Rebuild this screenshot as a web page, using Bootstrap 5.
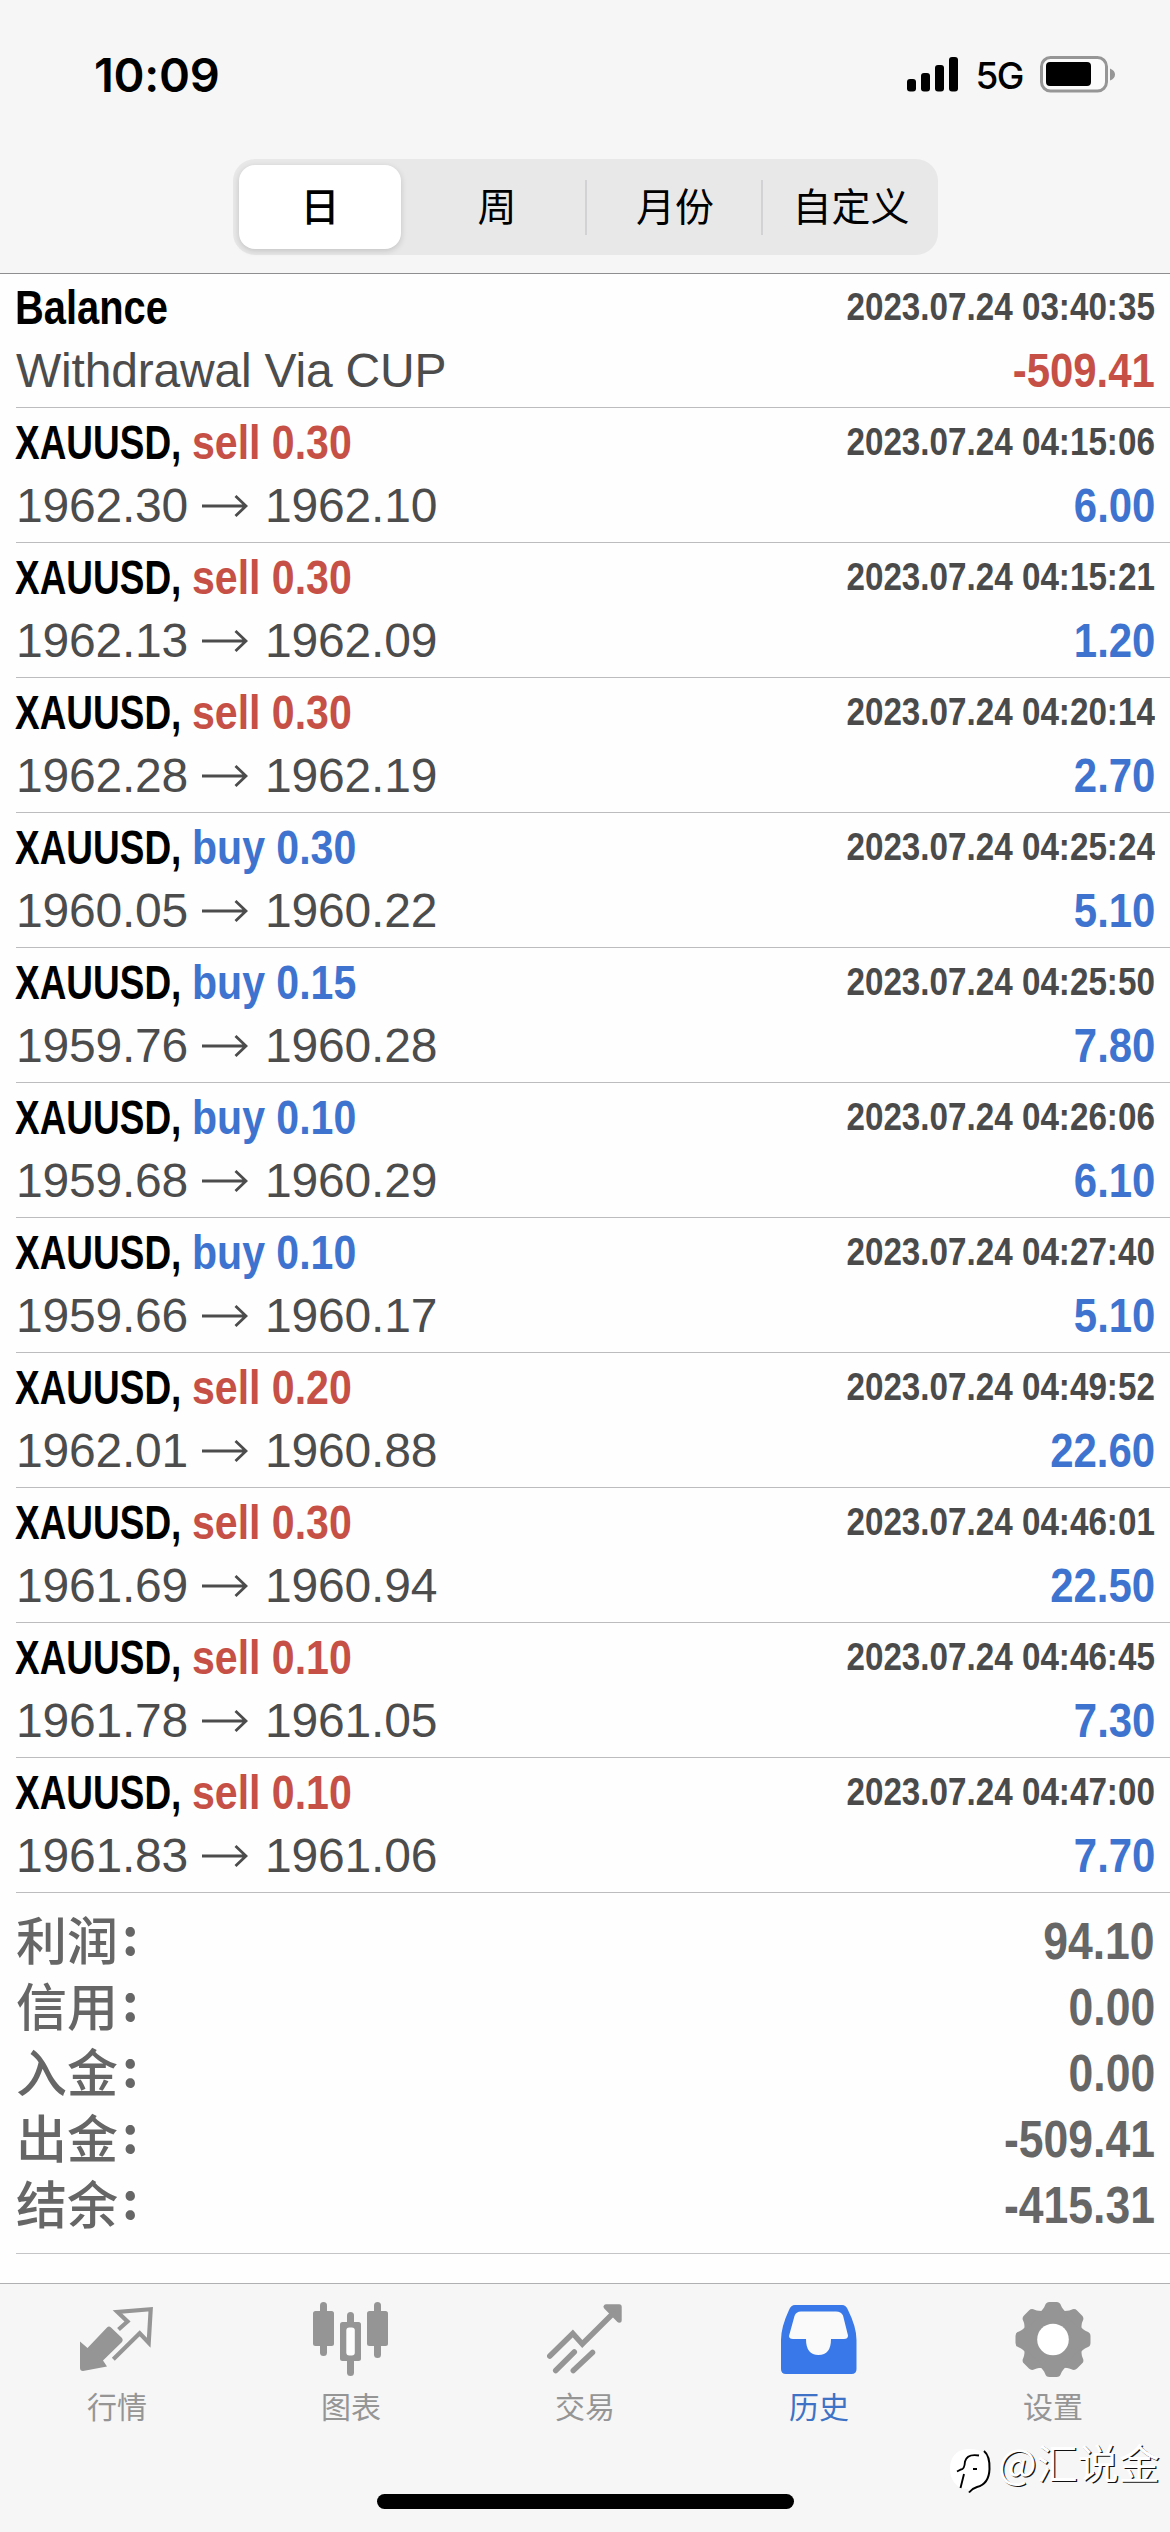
<!DOCTYPE html>
<html lang="zh-CN">
<head>
<meta charset="utf-8">
<meta name="viewport" content="width=device-width, initial-scale=1">
<title>历史</title>
<link href="https://cdn.jsdelivr.net/npm/bootstrap@5.3.0/dist/css/bootstrap.min.css" rel="stylesheet">
<style>
body{width:1170px;height:2532px;background:#fefefe;overflow:hidden;font-family:"Liberation Sans","Noto Sans CJK SC",sans-serif;color:#000}
.topbar{height:274px;background:#f6f6f6;border-bottom:1px solid #8e8e90}
.status{height:159px;padding:0 53px 10px 94px}
.clock{font:600 47px/1 Inter,sans-serif;letter-spacing:-.3px}
.net{font:500 37px/1 Inter,sans-serif;margin:2px 17px 0 16px;letter-spacing:-1.5px}
.seg{width:705px;height:96px;margin-left:233px;padding:6px;background:#e8e8e9;border-radius:22px}
.seg-item{font:400 39px/78px "Noto Sans CJK SC",sans-serif;color:#000;padding:0 0 6px;border:0;width:176px;flex:none}
.seg-item.active{font-weight:500;background:#fff;border-radius:16px;width:162px;box-shadow:0 2px 6px rgba(0,0,0,.16)}
.seg-item.ruled{border-left:2px solid #d2d2d4;line-height:49px;height:55px;padding-left:2px}
.deal{height:135px;margin-left:16px;padding:3px 15px 0 0;border-bottom:1px solid #bcbcbe}
.deal.first{height:134px;padding-top:2px}
.ln{height:63px;line-height:63px;font-size:48px;white-space:nowrap}
.sym{width:176px;font-weight:700;margin-left:-1px;transform:scaleX(.77);transform-origin:0 50%}
.sym.wide{transform:scaleX(.83)}
.act{font-weight:700;margin-left:1px;transform:scaleX(.855);transform-origin:0 50%}
.when{font-size:38px;font-weight:700;color:#4a4a4a;transform:scaleX(.874);transform-origin:100% 50%}
.amt{font-weight:700;transform:scaleX(.873);transform-origin:100% 50%}
.px{color:#4c4c4c;letter-spacing:-.2px}
.px .amt{letter-spacing:0}
.arrow{margin:0 17px 0 14px}
.red{color:#c65046}.blue{color:#3e74cf}
.sums{height:361px;margin-left:16px;padding:16px 15px 0 0;border-bottom:1px solid #c4c4c6;color:#666}
.sum{height:66px;line-height:66px;font-size:51px;font-weight:700}
.sum-name{font-family:"Noto Sans CJK SC",sans-serif;font-weight:500;line-height:59px}
.colon{margin-left:4px;font-family:"Noto Sans CJK SC",sans-serif;line-height:49px}
.tabs{height:250px;margin-top:29px;background:#f6f6f6;border-top:1px solid #b0b0b2;position:relative}
.tab{width:234px;padding-top:18px;color:#959595;font:400 30px/42px "Noto Sans CJK SC",sans-serif}
.tab svg{width:76px;height:76px;margin-bottom:6px}
.tab.on{color:#3d72c6}
.homebar{left:377px;top:210px;width:417px;height:15px;border-radius:8px;background:#000}
.wm{left:949px;top:158px;font:400 41px/52px "Noto Sans CJK SC",sans-serif;color:#fff;text-shadow:1.3px 1px 0 #111;white-space:nowrap}
.wm svg{margin-right:6px;margin-top:5px}
.wm span{margin-top:-7px}
</style>
</head>
<body>
<header class="topbar">
  <div class="status d-flex align-items-center">
    <span class="clock me-auto">10:09</span>
    <svg width="52" height="35" viewBox="0 0 52 35"><rect y="22" width="9" height="12.500" rx="3"/><rect x="14" y="16" width="9" height="18.500" rx="3"/><rect x="28" y="8" width="9" height="26.500" rx="3"/><rect x="42" width="9" height="34.500" rx="3"/></svg>
    <span class="net">5G</span>
    <svg width="77" height="37" viewBox="0 0 77 37"><rect x="1.500" y="1.500" width="65" height="33.500" rx="9" fill="#fbfbfb" stroke="#969696" stroke-width="3"/><rect x="6" y="6" width="45" height="24" rx="4"/><path d="M70 12.500q5 2 5 6t-5 6z" fill="#969696"/></svg>
  </div>
  <div class="seg d-flex align-items-center">
    <button class="btn seg-item active">日</button>
    <button class="btn seg-item ms-2">周</button>
    <button class="btn seg-item ruled rounded-0">月份</button>
    <button class="btn seg-item ruled rounded-0">自定义</button>
  </div>
</header>
<main>
  <section id="deals">
    <div class="deal first">
      <div class="ln d-flex justify-content-between"><span class="sym wide">Balance</span><span class="when">2023.07.24 03:40:35</span></div>
      <div class="ln d-flex justify-content-between"><span class="px">Withdrawal Via CUP</span><span class="amt red">-509.41</span></div>
    </div>
  </section>
  <section class="sums" id="sums"></section>
</main>
<nav class="tabs">
  <div class="d-flex text-center">
    <div class="tab d-flex flex-column align-items-center">
      <svg viewBox="0 0 76 76"><path fill="#959595" d="M1 39.500l7.500 6.500L28 25.500q2-2 4 0l11 10.500q1.500 2 0 4L24 58.500l4 6L4 69q-3 0-3-3z"/><path d="M39.500 27.500l9-8-10-9.500 33.200-2.800-2 33.500-9-9.400-26.400 26" fill="none" stroke="#959595" stroke-width="4.200"/></svg>行情</div>
    <div class="tab d-flex flex-column align-items-center">
      <svg viewBox="0 0 76 76" fill="#959595"><rect x="7" width="7" height="54" rx="3.500"/><rect y="9" width="21" height="35" rx="2.500"/><rect x="61" width="7" height="56" rx="3.500"/><rect x="54" y="9" width="21" height="35" rx="2.500"/><rect x="34" y="10" width="7" height="64" rx="3.500"/><rect x="27" y="20" width="21" height="39" rx="2.500"/><rect x="33.300" y="25.500" width="8.500" height="28" rx="3" fill="#fdfdfd"/></svg>图表</div>
    <div class="tab d-flex flex-column align-items-center">
      <svg viewBox="0 0 76 76" fill="none" stroke="#959595" stroke-width="5.500" stroke-linecap="round"><path d="M2.800 54l23-22.500 9.500 10.500L70 7.500M8.700 68.500l18.600-18.500M26.300 68.500L45.500 50.500"/><path d="M59 4.800h13.200v13.500z" fill="#959595" stroke-linejoin="round" stroke-width="5"/></svg>交易</div>
    <div class="tab on d-flex flex-column align-items-center">
      <svg viewBox="0 0 76 76"><path fill="#3878e8" d="M14 3h47q4 0 6 5 8.500 17 8.500 30v29q0 5-5 5H5q-5 0-5-5V38Q0 25 8 8q2-5 6-5z"/><path fill="#fafafa" d="M20 9.500h35q5 0 7 4l5 20q0 3.500-4 3.500H50q0 16-12.500 16T25 37H12q-4 0-4-3l5.500-20q1.500-4.500 6.500-4.500z"/></svg>历史</div>
    <div class="tab d-flex flex-column align-items-center">
      <svg viewBox="-38 -37.500 76 76" fill="#959595"><defs><path id="tooth" d="M-14-26C-11-29.500-9-31-8-34Q-7-37.500-3.500-37.500h7Q7-37.500 8-34C9-31 11-29.500 14-26z"/></defs><circle r="30"/><use href="#tooth"/><use href="#tooth" transform="rotate(45)"/><use href="#tooth" transform="rotate(90)"/><use href="#tooth" transform="rotate(135)"/><use href="#tooth" transform="rotate(180)"/><use href="#tooth" transform="rotate(225)"/><use href="#tooth" transform="rotate(270)"/><use href="#tooth" transform="rotate(315)"/><circle r="15.800" fill="#fff"/></svg>设置</div>
  </div>
  <div class="homebar position-absolute"></div>
  <div class="wm position-absolute d-flex align-items-start"><svg width="43" height="48" viewBox="0 0 43 48"><path d="M20 2C6 2 1 12 1 22s6 20 18 20l2 4q20-7 20-26C41 8 34 2 20 2z" fill="#fff"/><path d="M35 4q6 5 5.500 18-.5 15-12.500 18-5 1.500-8 5.500" fill="none" stroke="#000" stroke-width="2"/><path d="M30 8.500q-12-2-14 6-.5 8-4 8L8 24.500M15 27l-3.500 14M24 22h4" fill="none" stroke="#000" stroke-width="1.900"/></svg><span>@汇说金</span></div>
</nav>
<script>
const deals=[
["sell","0.30","1962.30","1962.10","04:15:06","6.00"],
["sell","0.30","1962.13","1962.09","04:15:21","1.20"],
["sell","0.30","1962.28","1962.19","04:20:14","2.70"],
["buy","0.30","1960.05","1960.22","04:25:24","5.10"],
["buy","0.15","1959.76","1960.28","04:25:50","7.80"],
["buy","0.10","1959.68","1960.29","04:26:06","6.10"],
["buy","0.10","1959.66","1960.17","04:27:40","5.10"],
["sell","0.20","1962.01","1960.88","04:49:52","22.60"],
["sell","0.30","1961.69","1960.94","04:46:01","22.50"],
["sell","0.10","1961.78","1961.05","04:46:45","7.30"],
["sell","0.10","1961.83","1961.06","04:47:00","7.70"]];
document.getElementById("deals").insertAdjacentHTML("beforeend",deals.map(([side,vol,open,close,time,profit])=>`
<div class="deal">
  <div class="ln d-flex"><span class="sym">XAUUSD,</span><span class="act ${side==="sell"?"red":"blue"}">${side} ${vol}</span><span class="when ms-auto">2023.07.24 ${time}</span></div>
  <div class="ln d-flex align-items-center px"><span>${open}</span><svg class="arrow" width="46" height="24" viewBox="0 0 46 24" fill="none" stroke="#4c4c4c" stroke-width="2.800"><path d="M0 12h44M33.500 2L44 12 33.500 22"/></svg><span>${close}</span><span class="amt blue ms-auto">${profit}</span></div>
</div>`).join(""));
const sums=[["利润","94.10"],["信用","0.00"],["入金","0.00"],["出金","-509.41"],["结余","-415.31"]];
document.getElementById("sums").innerHTML=sums.map(([name,value])=>`<div class="sum d-flex"><span class="sum-name">${name}</span><span class="colon">:</span><span class="amt ms-auto">${value}</span></div>`).join("");
</script>
<script src="https://cdn.jsdelivr.net/npm/bootstrap@5.3.0/dist/js/bootstrap.bundle.min.js"></script>
</body>
</html>
